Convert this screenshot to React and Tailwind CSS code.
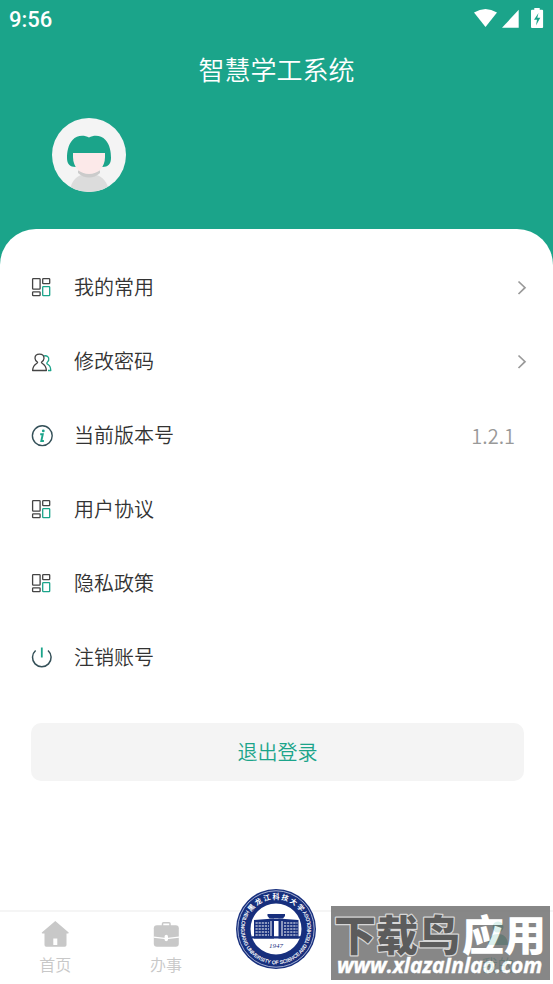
const TEAL = '#1ba48a';

function StatusIcons() {
  return (
    <svg className="mb-1 h-5 w-[70px]" viewBox="0 0 70 20" fill="white" aria-hidden="true">
      <path d="M0 4.500Q11.500-2.500 23 4.500L11.500 19Z" />
      <path d="M28 19.700 44.700 1.800V19.700Z" />
      <path d="M60.300 0h5.400v1.800h2.400q1 0 1 1V19q0 1-1 1H58q-1 0-1-1V2.800q0-1 1-1h2.300z" />
      <path d="M64.500 5 60 11.700h3l-1 5.800 4.300-7.700h-3l1.200-4.800z" fill={TEAL} />
    </svg>
  );
}

function Avatar() {
  return (
    <svg className="size-[74px]" viewBox="0 0 74 74" role="img" aria-label="头像">
      <clipPath id="face"><circle cx="37" cy="37" r="37" /></clipPath>
      <circle cx="37" cy="37" r="37" fill="#f4f4f4" />
      <g clipPath="url(#face)">
        <path d="M37 19.500C42 17 49 17 53.500 22 58 27 59 34 59 40c0 6-3 9-8.500 9h-27C18 49 15 46 15 40c0-6 1-13 5.500-18C25 17 32 17 37 19.500Z" fill={TEAL} />
        <path d="M18 74C18.500 64 24 58 30 57h14c6 1 12 7 13 17Z" fill="#dcdcdc" />
        <path d="M26 52.500H48V55Q43 59.500 37 59.500T26 55Z" fill="#cbcbcb" />
        <path d="M21 35H53V39C53 49.500 46 56 37 56S21 49.500 21 39Z" fill="#fce9e9" />
      </g>
    </svg>
  );
}

function GridIcon() {
  return (
    <svg className="size-[22px]" viewBox="0 0 22 22" fill="none" stroke="#444" strokeWidth="1.300" aria-hidden="true">
      <rect x="1.600" y="1.600" width="7.500" height="10.500" rx=".7" />
      <rect x="11.700" y="1.600" width="7" height="5" rx=".7" />
      <rect x="1.600" y="14.900" width="7.500" height="3.800" rx=".7" />
      <rect x="11.700" y="9.600" width="7" height="9.100" rx=".7" stroke={TEAL} />
    </svg>
  );
}

function UsersIcon() {
  return (
    <svg className="size-[22px]" viewBox="0 0 22 22" fill="none" strokeWidth="1.300" strokeLinejoin="round" aria-hidden="true">
      <path d="M12.500 5C16 4 18.300 6 17.700 9c-.3 1.500-1.900 2.300-1.900 3.200 0 1.200 2.500 1.500 3.300 3.700.5 1.300.6 2.300.7 3.600H17" stroke={TEAL} />
      <path d="M6.600 11.200C4.800 10 4 8.500 4 7.200 4 4.800 6 3.200 8.500 3.200S13 4.800 13 7.200c0 1.300-.8 2.800-2.600 4 0 2 4.600 1.200 5 8.300H1.600c.4-7.100 5-6.300 5-8.300Z" stroke="#444" />
    </svg>
  );
}

function InfoIcon() {
  return (
    <svg className="size-[22px]" viewBox="0 0 22 22" fill="none" aria-hidden="true">
      <circle cx="11.300" cy="10.700" r="9.900" stroke="#345058" strokeWidth="1.400" />
      <circle cx="12.300" cy="5.900" r="1.400" fill={TEAL} />
      <path d="M9.200 9.200h2.600l-1.500 6.800h2.600" stroke={TEAL} strokeWidth="1.900" />
    </svg>
  );
}

function PowerIcon() {
  return (
    <svg className="size-[22px]" viewBox="0 0 22 22" fill="none" strokeWidth="1.500" aria-hidden="true">
      <path d="M4.600 3.500A9.300 9.300 0 1 0 17 3.500" stroke="#345058" />
      <path d="M10.800.5v10" stroke={TEAL} strokeWidth="1.800" />
    </svg>
  );
}

function Chevron() {
  return (
    <svg className="h-4 w-2.5" viewBox="0 0 10 16" fill="none" stroke="#999" strokeWidth="1.700" aria-hidden="true">
      <path d="M1.500 1.500 8 7.700 1.500 14" />
    </svg>
  );
}

function HomeIcon() {
  return (
    <svg className="h-7 w-7" viewBox="0 0 28 28" fill="#c8c8c8" aria-hidden="true">
      <path fillRule="evenodd" d="M14.300 1 27.700 12.500q.3 1-.8 1H25.500V25q0 1.700-1.700 1.700H5.200Q3.500 26.700 3.500 25V13.500H1.600q-1.100 0-.8-1ZM12.300 18.500v6.500h4V18.500Z" />
    </svg>
  );
}

function CaseIcon() {
  return (
    <svg className="h-7 w-7" viewBox="0 0 28 28" fill="#c8c8c8" aria-hidden="true">
      <path d="M10.500 6V3.800Q10.500 2.800 11.500 2.800h5.500q1 0 1 1V6" fill="none" stroke="#c8c8c8" strokeWidth="1.500" />
      <rect x="1.800" y="5.300" width="25" height="21.400" rx="3" />
      <path d="M1.500 17.200 14.300 18.700l12.700-1.500" fill="none" stroke="white" strokeWidth="1.200" />
      <rect x="12.600" y="14.800" width="3.400" height="6.500" rx="1.700" fill="white" />
    </svg>
  );
}

function UserIcon() {
  return (
    <svg className="h-7 w-7" viewBox="0 0 28 28" fill={TEAL} aria-hidden="true">
      <circle cx="14" cy="7" r="5.500" />
      <path d="M4 25c0-8 5-11 10-11s10 3 10 11Z" />
    </svg>
  );
}

function Seal() {
  return (
    <svg className="size-[82px] overflow-visible" viewBox="0 0 82 82" role="img" aria-label="黑龙江科技大学">
      <defs>
        <path id="sealTop" d="M11 41A30 30 0 0 1 71 41" />
        <path id="sealBottom" d="M13.500 19.500A35 35 0 1 0 68.500 19.500" />
      </defs>
      <circle cx="41" cy="41" r="40.500" fill="white" />
      <circle cx="41" cy="41" r="40" fill="#172f7d" />
      <circle cx="41" cy="41" r="38.200" fill="none" stroke="#b5bedb" strokeWidth=".9" />
      <circle cx="41" cy="41" r="25.500" fill="white" />
      <text fill="white" fontSize="7" fontWeight="700" fontFamily="'Noto Sans CJK SC', sans-serif" textAnchor="middle">
        <textPath href="#sealTop" startOffset="50%">黑 龙 江 科 技 大 学</textPath>
      </text>
      <text fill="white" stroke="white" strokeWidth=".15" fontSize="5" fontFamily="'Liberation Sans Narrow', 'Liberation Sans', sans-serif" textAnchor="middle">
        <textPath href="#sealBottom" startOffset="50%">HEILONGJIANG UNIVERSITY OF SCIENCE AND TECHNOLOGY</textPath>
      </text>
      <g fill="#172f7d">
        <path d="M32.500 26H50V28L48 30.500H34.500L32.500 28Z" />
        <path d="M36 31H46.500V33H36Z" />
        <path d="M19 32 39 30.500V50.500H19Z" />
        <path d="M43.500 30.500 63.500 32V50.500H43.500Z" />
        <path d="M16.500 48.200H66V50.500H16.500Z" />
      </g>
      <g stroke="white" strokeWidth="1.200" strokeDasharray="2.200 .9" fill="none">
        <path d="M20.500 35H34M20.500 38H34M20.500 41H34M20.500 44H34M20.500 47H34" />
        <path d="M49 35H62.500M49 38H62.500M49 41H62.500M49 44H62.500M49 47H62.500" />
      </g>
      <path d="M36 33V48M47 33V48" stroke="white" strokeWidth="1" />
      <text x="41" y="60" fill="#172f7d" fontSize="7" fontStyle="italic" fontFamily="'Liberation Serif', serif" textAnchor="middle">1947</text>
    </svg>
  );
}

const rows = [
  { label: '我的常用', Icon: GridIcon, chevron: true },
  { label: '修改密码', Icon: UsersIcon, chevron: true },
  { label: '当前版本号', Icon: InfoIcon, value: '1.2.1' },
  { label: '用户协议', Icon: GridIcon },
  { label: '隐私政策', Icon: GridIcon },
  { label: '注销账号', Icon: PowerIcon },
];

function Tab({ label, Icon, active }) {
  return (
    <a href="#" className={`flex flex-1 flex-col items-center pt-2 text-base leading-6 ${active ? 'text-[#1ba48a]' : 'text-[#c8c8c8]'}`}>
      <Icon />
      <span className="mt-1">{label}</span>
    </a>
  );
}

function Watermark() {
  return (
    <div className="pointer-events-none absolute right-[3px] bottom-1 h-[74px] w-[219px] bg-[#737373] opacity-85">
      <svg className="h-full w-full overflow-visible" viewBox="0 0 219 74">
        <g fontFamily="'Noto Sans CJK SC', sans-serif" fontWeight="900" fontSize="42" strokeLinejoin="round">
          <text x="3" y="45" fill="#404040" stroke="#cfcfcf" strokeWidth="2.500" paintOrder="stroke">下载鸟</text>
          <text x="131" y="45" fill="white">应用</text>
        </g>
        <text x="6" y="67" fill="white" stroke="white" strokeWidth=".4" fontFamily="'Open Sans', sans-serif" fontWeight="700" fontStyle="italic" fontSize="21">www.xlazaInlao.com</text>
      </svg>
    </div>
  );
}

export default function App() {
  return (
    <div className="flex min-h-screen flex-col bg-[#1ba48a] font-['Noto_Sans_CJK_SC',sans-serif] font-[350]">
      <header className="text-white">
        <div className="flex h-10 items-center justify-between pr-[9px] pl-[9px]">
          <span className="font-['Roboto',sans-serif] text-[22px] leading-6 font-medium">9:56</span>
          <StatusIcons />
        </div>
        <h1 className="text-center text-[26px] leading-[58px] font-[350]">智慧学工系统</h1>
        <div className="px-[52px] pt-5 pb-[37px]">
          <Avatar />
        </div>
      </header>
      <main className="flex-1 rounded-t-[36px] bg-white pt-[22px]">
        <ul>
          {rows.map(({ label, Icon, chevron, value }) => (
            <li key={label}>
              <button type="button" className="flex h-[74px] w-full items-center pr-[26px] pl-[31px] text-left text-xl text-[#333]">
                <Icon />
                <span className="ml-[21px] flex-1 pb-0.5">{label}</span>
                {value && <span className="mr-3 text-[#999]">{value}</span>}
                {chevron && <Chevron />}
              </button>
            </li>
          ))}
        </ul>
        <div className="pt-7 pr-[29px] pl-[31px]">
          <button type="button" className="h-[58px] w-full rounded-[10px] bg-[#f4f4f4] text-xl text-[#1ba48a]">退出登录</button>
        </div>
      </main>
      <nav className="relative flex h-[74px] border-t-2 border-[#f5f5f5] bg-white">
        <Tab label="首页" Icon={HomeIcon} />
        <Tab label="办事" Icon={CaseIcon} />
        <a href="#" className="-mt-6 flex flex-1 justify-center"><Seal /></a>
        <div className="flex-1" />
        <Tab label="我的" Icon={UserIcon} active />
        <Watermark />
      </nav>
    </div>
  );
}
